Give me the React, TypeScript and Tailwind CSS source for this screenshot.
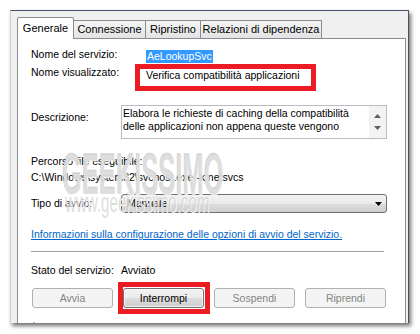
const disabledBtn =
  'w-[81px] h-[20px] flex items-center justify-center rounded-[3px] border border-[#adb2b5] bg-[#f4f4f4] text-[#838383]'

function ScrollArrow({ up }: { up?: boolean }) {
  return (
    <svg width="7" height="4" viewBox="0 0 7 4">
      <path d={up ? 'M0 4 L3.5 0 L7 4 Z' : 'M0 0 L3.5 4 L7 0 Z'} fill="#606060" />
    </svg>
  )
}

export default function App() {
  return (
    <div className="relative w-[420px] h-[334px] overflow-hidden bg-white font-['Liberation_Sans',Arial,sans-serif] text-[10.5px] leading-[13px] text-black">
      {/* finestra */}
      <div className="ml-[10px] mt-[10px] w-[399px] h-[313px] overflow-hidden bg-[#f0f0f0] border-t border-t-[#44506e] border-l border-l-[#cfcfcf] border-r border-r-[#505050] shadow-[2px_3px_4px_rgba(0,0,0,0.55)] pl-[6px] pt-[6px]">
        {/* schede */}
        <div className="flex items-end h-[22px] text-[11px]">
          <div className="relative z-10 w-[57px] h-[22px] flex items-center justify-center bg-white border border-b-0 border-[#898c95] rounded-t-[2px]">
            Generale
          </div>
          <div className="w-[72px] h-[18px] mb-[1px] flex items-center justify-center border-t border-r border-[#898c95] bg-linear-to-b from-[#f5f5f5] to-[#e3e3e3]">
            Connessione
          </div>
          <div className="w-[55px] h-[18px] mb-[1px] flex items-center justify-center border-t border-r border-[#898c95] bg-linear-to-b from-[#f5f5f5] to-[#e3e3e3]">
            Ripristino
          </div>
          <div className="w-[121px] h-[18px] mb-[1px] flex items-center justify-center border-t border-r border-[#898c95] bg-linear-to-b from-[#f5f5f5] to-[#e3e3e3]">
            Relazioni di dipendenza
          </div>
        </div>

        {/* pannello */}
        <div className="-mt-px w-[389px] h-[320px] border border-[#898c95] bg-white pl-[13px] flex flex-col">
          <div className="mt-[9px] flex items-start">
            <div className="w-[115px]">Nome del servizio:</div>
            <div className="mt-[2px] h-[13px] px-px bg-[#3399ff] text-white">AeLookupSvc</div>
          </div>

          <div className="mt-[3px] flex items-start">
            <div className="w-[115px]">Nome visualizzato:</div>
            <div className="mt-[3px]">Verifica compatibilità applicazioni</div>
          </div>

          <div className="mt-[23px] flex items-start">
            <div className="w-[90px] pt-[6px]">Descrizione:</div>
            <div className="w-[266px] h-[34px] border border-[#b9bcc2] flex">
              <div className="flex-1 pl-[1px] pt-[1px] overflow-hidden whitespace-nowrap">
                <div>Elabora le richieste di caching della compatibilità</div>
                <div>delle applicazioni non appena queste vengono</div>
              </div>
              <div className="w-[17px] bg-[#f3f3f3] flex flex-col items-center justify-between py-[8px]">
                <ScrollArrow up />
                <ScrollArrow />
              </div>
            </div>
          </div>

          <div className="mt-[16px]">Percorso file eseguibile:</div>
          <div className="mt-[3px]">C:\Windows\system32\svchost.exe -k netsvcs</div>

          <div className="mt-[10px] flex items-center">
            <div className="w-[90px]">Tipo di avvio:</div>
            <div className="w-[266px] h-[19px] flex items-center justify-between pl-[5px] pr-[4px] rounded-[3px] border border-[#707070] bg-[linear-gradient(#f2f2f2_0%,#ebebeb_50%,#dddddd_50%,#cfcfcf_100%)]">
              <span>Manuale</span>
              <svg width="7" height="4" viewBox="0 0 7 4">
                <path d="M0 0 L3.5 4 L7 0 Z" fill="#000" />
              </svg>
            </div>
          </div>

          <div className="mt-[15px] text-[#0066cc] underline">
            Informazioni sulla configurazione delle opzioni di avvio del servizio.
          </div>

          <div className="mt-[10px] w-[353px] h-px bg-[#a0a0a0]" />

          <div className="mt-[12px] flex">
            <div className="w-[90px]">Stato del servizio:</div>
            <div>Avviato</div>
          </div>

          <div className="mt-[11px] flex gap-[10px] pl-px">
            <div className={disabledBtn}>Avvia</div>
            <div className="w-[81px] h-[20px] flex items-center justify-center rounded-[3px] border border-[#707070] bg-[linear-gradient(#f2f2f2_0%,#ebebeb_50%,#dddddd_50%,#cfcfcf_100%)] shadow-[inset_0_0_0_1px_rgba(255,255,255,0.7)]">
              Interrompi
            </div>
            <div className={disabledBtn}>Sospendi</div>
            <div className={disabledBtn}>Riprendi</div>
          </div>

          <div className="mt-[14px] whitespace-nowrap">
            È possibile specificare i parametri di avvio da applicare quando il servizio viene avviato da qui.
          </div>
        </div>
      </div>

      {/* filigrana */}
      <div className="pointer-events-none absolute left-[62px] top-[145px] origin-left scale-x-[0.44] whitespace-nowrap text-[58px] leading-none font-bold text-[rgba(205,205,205,0.6)] [text-shadow:1px_1px_0_rgba(255,255,255,0.85),-1px_-1px_0_rgba(120,120,120,0.25)]">
        GEEKISSIMO
      </div>
      <div className="pointer-events-none absolute left-[65px] top-[190px] origin-left scale-x-[0.56] whitespace-nowrap text-[27px] leading-none text-[rgba(200,200,200,0.6)] [text-shadow:1px_1px_0_rgba(255,255,255,0.85)]">
        www.geekissimo.com
      </div>

      {/* evidenziazioni */}
      <div className="pointer-events-none absolute left-[135px] top-[64px] w-[181px] h-[27px] border-[5px] border-[#ec1c24]" />
      <div className="pointer-events-none absolute left-[118px] top-[282px] w-[92px] h-[32px] border-[5px] border-[#ec1c24]" />
    </div>
  )
}
